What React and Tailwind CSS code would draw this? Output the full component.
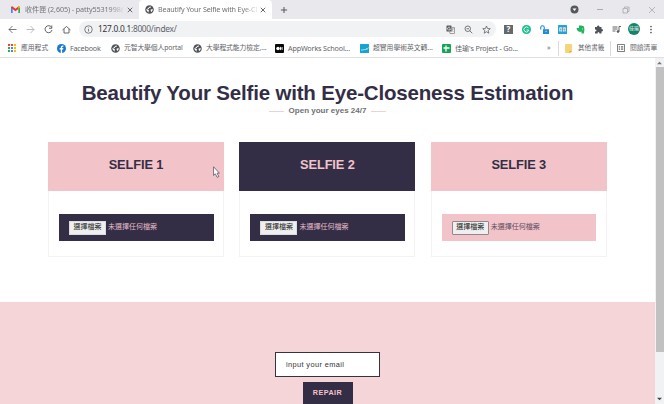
import React from "react";

const ui = "font-['Noto_Sans','Noto_Sans_CJK_TC',sans-serif]";
const sans = "font-['Liberation_Sans','Noto_Sans_CJK_TC',sans-serif]";

function Gmail() {
  return (
    <svg viewBox="0 0 16 12" className="block h-[7px] w-[9px] shrink-0">
      <path d="M0 12V2l3 2v8z" fill="#4285f4" />
      <path d="M13 12V4l3-2v10z" fill="#34a853" />
      <path d="M0 1.5Q1.5-.5 3 .8l5 4 5-4q1.500-1.300 3 .7V3L8 9 0 3z" fill="#e53935" />
      <path d="M13 .8q3-1.800 3 1.700L13 5z" fill="#fbbc04" />
    </svg>
  );
}

function Globe() {
  return (
    <svg viewBox="0 0 18 18" className="block size-[9px] shrink-0">
      <circle cx="9" cy="9" r="8.500" fill="#505357" />
      <path d="M2.500 8l3.500 1 2 2-1 2 1 2.500Q3 14 2.500 8zM10 3l2 .5-1 2-2.500.5-1 2H5.500L5 6.500l2-1zM12 9l3.500-1q0 4-2.500 6l-1.500-1.500.5-1-1.500-1.500z" fill="#fff" />
    </svg>
  );
}

function Line({ d, className = "size-[9px]", width = 1.6 }) {
  return (
    <svg viewBox="0 0 18 18" className={`block shrink-0 ${className}`} fill="none" stroke="#55585c" strokeWidth={width}>
      <path d={d} />
    </svg>
  );
}

function AppsGrid() {
  const colors = ["#ea4335", "#ea4335", "#fbbc04", "#34a853", "#4285f4", "#fbbc04", "#34a853", "#4285f4", "#fbbc04"];
  return (
    <span className="grid size-[8px] grid-cols-3 gap-px">
      {colors.map((c, i) => <i key={i} className="block size-[2px]" style={{ background: c }} />)}
    </span>
  );
}

function Facebook() {
  return (
    <svg viewBox="0 0 18 18" className="block size-[9px]">
      <circle cx="9" cy="9" r="9" fill="#1877d2" />
      <path d="M7.500 18v-7H5.300V8.200h2.200V6.500Q7.500 3 11 3h1.800v2.600h-1.300q-1.200 0-1.200 1.200v1.400h2.400l-.4 2.800h-2v7z" fill="#fff" />
    </svg>
  );
}

function AppWorks() {
  return (
    <svg viewBox="0 0 18 18" className="block size-[9px]">
      <rect width="18" height="18" rx="2" fill="#080808" />
      <circle cx="6" cy="9" r="3.500" fill="#fff" />
      <ellipse cx="11.500" cy="9" rx="1.600" ry="3.500" fill="#fff" />
      <path d="M15 6v6" stroke="#fff" />
    </svg>
  );
}

function Academic() {
  return (
    <svg viewBox="0 0 18 18" className="block size-[9px]">
      <rect width="18" height="18" rx="1" fill="#18a4d0" />
      <path d="M2 12h5l2-2 2 2 2-3 1 2 3-4" stroke="#d8f3fa" strokeWidth="1.500" fill="none" />
    </svg>
  );
}

function Sheet() {
  return (
    <svg viewBox="0 0 18 18" className="block size-[9px]">
      <rect width="18" height="18" rx="2" fill="#16a455" />
      <path d="M8 3v12M3 8h12" stroke="#fff" strokeWidth="2.600" />
    </svg>
  );
}

function Bookmark({ icon, label, cell, textWidth }) {
  return (
    <div className={`flex shrink-0 items-center ${cell}`}>
      <span className="flex w-[13px] shrink-0 items-center">{icon}</span>
      <span className={`leading-[10px] whitespace-nowrap ${textWidth}`}>{label}</span>
    </div>
  );
}

function Browser() {
  return (
    <header className={`h-[58px] text-[#5f6368] ${ui}`}>
      <div className="flex h-[19px] items-center bg-[#e8e8ed]">
        <div className="flex h-full w-[139px] shrink-0 items-center pl-[11px]">
          <Gmail />
          <span className="ml-[5px] w-[98px] whitespace-nowrap bg-linear-to-r from-[#6b6e73] from-85% to-[#d4d4da] bg-clip-text text-[7.2px] tracking-[-0.1px] text-transparent">收件匣 (2,605) - patty5531998@</span>
          <Line d="M4 4l10 10M14 4L4 14" className="ml-[3px] size-[8px]" width={2} />
        </div>
        <div className="flex h-full w-[133px] shrink-0 items-center rounded-t-[4px] bg-white pl-[6px]">
          <Globe />
          <span className="ml-[4px] w-[99px] whitespace-nowrap bg-linear-to-r from-[#66696e] from-85% to-[#e4e4e6] bg-clip-text text-[7.2px] tracking-[-0.15px] text-transparent">Beautify Your Selfie with Eye-Cl</span>
          <Line d="M4 4l10 10M14 4L4 14" className="ml-[2px] size-[8px]" width={2} />
        </div>
        <Line d="M9 2v14M2 9h14" className="ml-[8px] size-[8px]" width={2.3} />
        <div className="ml-auto flex w-[94px] items-center">
          <svg viewBox="0 0 18 18" className="size-[9px]"><circle cx="9" cy="9" r="8" fill="#55585c" /><path d="M5 7h8l-4 5z" fill="#fff" /></svg>
          <span className="ml-[18px] h-px w-[6px] bg-[#aaaab0]" />
          <svg viewBox="0 0 16 16" className="ml-[19px] size-[8px]" fill="none" stroke="#999ca2" strokeWidth="1.300"><path d="M2 5h9v9H2zM5 4V2h9v9h-3" /></svg>
          <svg viewBox="0 0 16 16" className="ml-[18px] size-[8px]" fill="none" stroke="#999ca2" strokeWidth="1.300"><path d="M2 2l12 12M14 2L2 14" /></svg>
        </div>
      </div>
      <div className="flex h-[20px] items-center bg-white">
        <div className="flex w-[79px] shrink-0 items-center pl-[8px]">
          <Line d="M17 9H2M9 2L2 9l7 7" />
          <span className="ml-[9px] opacity-50"><Line d="M1 9h15M9 2l7 7-7 7" /></span>
          <Line d="M15 4.500A7 7 0 1 0 16 10M15.500 1v5.500H10" className="ml-[9px] size-[9px]" width={1.9} />
          <Line d="M1 10l8-7 8 7M4 8v8h10V8" className="ml-[9px] size-[9px]" width={1.8} />
        </div>
        <div className="flex h-[16px] w-[417px] shrink-0 items-center rounded-full bg-[#f1f2f4] pl-[5px]">
          <Line d="M9 1.500a7.500 7.500 0 1 0 0 15a7.500 7.500 0 1 0 0-15M9 8v5M9 5v1.500" width={1.5} />
          <span className="ml-[5px] w-[120px] whitespace-nowrap text-[8.3px] tracking-[-0.25px]"><b className="font-normal text-[#303237]">127.0.0.1</b>:8000/index/</span>
          <div className="ml-auto flex items-center gap-[9px] pr-[5px]">
            <svg viewBox="0 0 18 18" className="size-[9px]"><rect x="1" y="1" width="10" height="12" rx="1" fill="#55585c" /><path d="M11 5h6v12H8l-1-4" fill="none" stroke="#777" strokeWidth="1.300" /><path d="M8.500 5.500A3 3 0 1 0 9 8H6" fill="none" stroke="#fff" strokeWidth="1.300" /><path d="M10 8h6M13 7v2q-1 3-3 4M11 10l4 4" stroke="#777" fill="none" /></svg>
            <Line d="M7.500 2a5.500 5.500 0 1 0 0 11a5.500 5.500 0 1 0 0-11M11.500 11.500l5 5M5 7.500h5" />
            <Line d="M9 2l2 5 5.500.4-4.200 3.600 1.300 5.400L9 13.500l-4.600 2.900 1.300-5.400L1.500 7.400 7 7z" width={1.5} />
          </div>
        </div>
        <div className="ml-[8px] flex items-center gap-[9px]">
          <span className="flex size-[9px] items-center justify-center bg-[#66696c] text-[8px] leading-none font-bold text-white">?</span>
          <svg viewBox="0 0 18 18" className="size-[9px]"><circle cx="9" cy="9" r="9" fill="#19bd8e" /><path d="M13 6a5 5 0 1 0 0 6V10H9" fill="none" stroke="#fff" strokeWidth="1.800" /></svg>
          <svg viewBox="0 0 18 18" className="size-[9px]"><path d="M1.500 9V5a3.500 3.500 0 0 1 7 0v4" fill="none" stroke="#1a8bd6" strokeWidth="2.200" /><rect x="6" y="8.500" width="12" height="9.500" fill="#168ce3" /><circle cx="12" cy="13" r="1.600" fill="#f5bf47" /></svg>
          <svg viewBox="0 0 18 18" className="size-[9px]"><rect width="18" height="18" rx="1" fill="#26a4d1" /><path d="M2.500 5q4-1 6.500 1 2.500-2 6.500-1v8q-4-1-6.500 1-2.500-2-6.500-1z" fill="#e8f6f9" /><path d="M9 6v8M4 8h3M4 10h3M11 8h3M11 10h3" stroke="#31617b" strokeWidth="1.200" /></svg>
          <svg viewBox="0 0 18 18" className="size-[9px]"><path d="M6 1h5l5 2q2 7-.5 14H11v-4l-3 1q-6-1-7-8h5z" fill="#20b65d" /><path d="M12 8h2" stroke="#fff" strokeWidth="1.500" /></svg>
          <svg viewBox="0 0 18 18" className="size-[9px]"><path d="M2 4h4q0-4 3-3 2 0 2 3h4v4q3 0 3 2.500T15 13v4h-4q0-3-2-3t-2 3H2v-4q3 0 3-2T2 9z" fill="#505357" /></svg>
          <svg viewBox="0 0 18 18" className="size-[9px]" fill="none" stroke="#505357" strokeWidth="1.800"><path d="M1 4h10M1 8h10M1 12h6M14 13V3h4" /><circle cx="12" cy="13" r="1.800" fill="#505357" /></svg>
        </div>
        <span className="ml-[7px] flex size-[12px] shrink-0 items-center justify-center rounded-full bg-[#168369] text-[5px] text-white">佳瑜</span>
        <svg viewBox="0 0 4 18" className="ml-[10px] h-[9px] w-[2px]" fill="#505357"><circle cx="2" cy="3" r="1.700" /><circle cx="2" cy="9" r="1.700" /><circle cx="2" cy="15" r="1.700" /></svg>
      </div>
      <div className="flex h-[19px] items-center border-b border-[#dedfe1] bg-white pl-[8px] text-[7.2px]">
        <Bookmark icon={<AppsGrid />} label="應用程式" cell="w-[49px]" textWidth="text-[6.8px]" />
        <Bookmark icon={<Facebook />} label="Facebook" cell="w-[54px]" textWidth="tracking-[-0.2px]" />
        <Bookmark icon={<Globe />} label="元智大學個人portal" cell="w-[82px]" textWidth="text-[6.8px] tracking-[-0.1px]" />
        <Bookmark icon={<Globe />} label="大學程式能力檢定,..." cell="w-[82px]" textWidth="text-[6.8px] tracking-[-0.1px]" />
        <Bookmark icon={<AppWorks />} label="AppWorks School..." cell="w-[85px]" textWidth="tracking-[-0.15px]" />
        <Bookmark icon={<Academic />} label="超實用學術英文轉..." cell="w-[82px]" textWidth="text-[6.8px]" />
        <Bookmark icon={<Sheet />} label="佳瑜's Project - Go..." cell="w-[105px]" textWidth="tracking-[-0.17px]" />
        <span className="w-[11px] shrink-0 leading-none">»</span>
        <i className="h-[15px] w-px bg-[#d8dade]" />
        <svg viewBox="0 0 14 18" className="ml-[6px] h-[9px] w-[7px]"><path d="M0 2q0-2 2-2h10q2 0 2 2v13l-3 3H2q-2 0-2-2z" fill="#f6d477" /><path d="M9 18v-4h5" fill="#d9a936" /></svg>
        <span className="ml-[6px] w-[32px] text-[6.6px] leading-[10px] whitespace-nowrap">其他書籤</span>
        <i className="h-[15px] w-px bg-[#d8dade]" />
        <svg viewBox="0 0 18 18" className="ml-[6px] size-[8px]" fill="none" stroke="#55585c" strokeWidth="1.800"><path d="M1 1h16v16H1zM4 6h3M9 6h5M4 9h3M9 9h5M4 12h3M9 12h5" /></svg>
        <span className="ml-[5px] text-[6.8px] leading-[10px] whitespace-nowrap">閱讀清單</span>
      </div>
    </header>
  );
}

function Card({ n, dark, fieldDark }) {
  return (
    <article className="flex h-[115px] w-[176px] shrink-0 flex-col border border-t-0 border-[#f5f2f3]">
      <h2 className={`-mx-px flex h-[49px] shrink-0 items-center justify-center pb-[3px] text-[12.8px] tracking-[-0.1px] font-bold ${dark ? "bg-[#332e46] text-[#f2c3c9]" : "bg-[#f2c3c9] text-[#332e46]"}`}>SELFIE {n}</h2>
      <div className={`mt-[23px] ml-[10px] flex h-[27px] w-[154.5px] items-center pl-[10px] ${fieldDark ? "bg-[#332e46] text-[#e3bbc7]" : "bg-[#f2c3c9] text-[#5f4d60]"}`}>
        <button className={`flex h-[14px] w-[37px] items-center justify-center border bg-[#efefef] text-[7px] whitespace-nowrap text-[#222] ${fieldDark ? "border-[#dcdce0]" : "rounded-[1px] border-[#92878e]"}`}>選擇檔案</button>
        <span className="ml-[2px] text-[7px] whitespace-nowrap">未選擇任何檔案</span>
      </div>
    </article>
  );
}

export default function App() {
  return (
    <div className="relative h-[404px] w-[664px] overflow-hidden bg-white">
      <Browser />
      <div className={`flex h-[346px] ${sans}`}>
        <main className="flex w-[655px] shrink-0 flex-col">
          <h1 className="mt-[22px] h-[26px] text-center text-[20.5px] leading-[26px] font-bold tracking-[-0.18px] whitespace-nowrap text-[#332e46]">Beautify Your Selfie with Eye-Closeness Estimation</h1>
          <div className="flex h-[10px] items-center justify-center gap-[5px] text-[8px] font-bold text-[#707074]">
            <i className="h-px w-[15px] bg-[#ead3d6]" />
            <span className="whitespace-nowrap">Open your eyes 24/7</span>
            <i className="h-px w-[15px] bg-[#ead3d6]" />
          </div>
          <section className="mt-[26px] flex h-[160px] shrink-0 gap-[15.4px] pl-[48px]">
            <Card n={1} fieldDark />
            <Card n={2} dark fieldDark />
            <Card n={3} />
          </section>
          <section className="flex h-[102px] shrink-0 flex-col items-center bg-[#f5d5d7] pt-[50px]">
            <input className="h-[25px] w-[105px] shrink-0 border border-[#37323f] bg-white pl-[10px] text-[7.4px] tracking-[0.38px] text-[#333] placeholder:text-[#333] placeholder:opacity-100" placeholder="input your email" />
            <button className="mt-[5px] h-[22px] w-[50px] shrink-0 bg-[#332e46] text-[7.2px] font-bold tracking-[0.5px] text-[#f2c3c9]">REPAIR</button>
          </section>
        </main>
        <aside className="flex w-[9px] flex-col items-center bg-[#f1f2f3]">
          <svg viewBox="0 0 8 6" className="mt-[3px] h-[4px] w-[5px]"><path d="M0 5l4-4 4 4z" fill="#777" /></svg>
          <div className="mt-[2px] h-[285px] w-[8px] bg-[#c1c1c1]" />
          <svg viewBox="0 0 8 6" className="mt-auto mb-[3px] h-[4px] w-[5px]"><path d="M0 1h8L4 5z" fill="#444" /></svg>
        </aside>
      </div>
      <svg viewBox="0 0 12 20" className="absolute top-[166px] left-[213px] h-[12px] w-[7px]"><path d="M1 1v15l3-3 3 6 3-1-3-6h4z" fill="#fff" stroke="#55505c" strokeWidth="1.300" /></svg>
    </div>
  );
}
